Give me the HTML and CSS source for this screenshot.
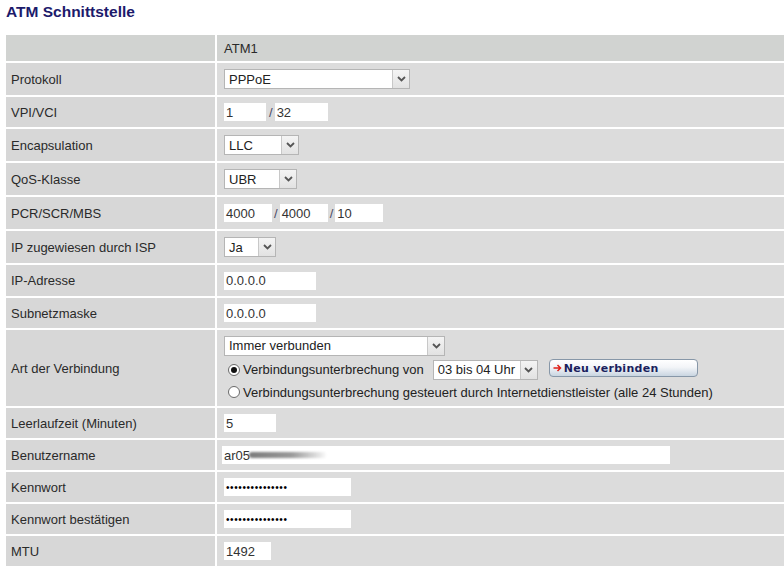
FILE: index.html
```html
<!DOCTYPE html>
<html lang="de">
<head>
<meta charset="utf-8">
<title>ATM Schnittstelle</title>
<link rel="stylesheet" href="styles.css">
</head>
<body>
<h1 class="title">ATM Schnittstelle</h1>
<div class="grid">
  <div class="cell head label"></div>
  <div class="cell head value">ATM1</div>

  <div class="cell label">Protokoll</div>
  <div class="cell value"><div class="sel w-proto"><span class="sel-txt">PPPoE</span><span class="sel-btn"><svg width="9" height="6" viewBox="0 0 9 6"><path d="M1 1 L4.5 4.5 L8 1" fill="none" stroke="#555" stroke-width="1.8"/></svg></span></div></div>

  <div class="cell label">VPI/VCI</div>
  <div class="cell value"><span class="inp w-42">1</span><span class="slash">/</span><span class="inp w-53">32</span></div>

  <div class="cell label">Encapsulation</div>
  <div class="cell value"><div class="sel w-enc"><span class="sel-txt">LLC</span><span class="sel-btn"><svg width="9" height="6" viewBox="0 0 9 6"><path d="M1 1 L4.5 4.5 L8 1" fill="none" stroke="#555" stroke-width="1.8"/></svg></span></div></div>

  <div class="cell label">QoS-Klasse</div>
  <div class="cell value"><div class="sel w-qos"><span class="sel-txt">UBR</span><span class="sel-btn"><svg width="9" height="6" viewBox="0 0 9 6"><path d="M1 1 L4.5 4.5 L8 1" fill="none" stroke="#555" stroke-width="1.8"/></svg></span></div></div>

  <div class="cell label">PCR/SCR/MBS</div>
  <div class="cell value"><span class="inp w-48">4000</span><span class="slash s-wide">/</span><span class="inp w-48">4000</span><span class="slash s-wide">/</span><span class="inp w-48">10</span></div>

  <div class="cell label">IP zugewiesen durch ISP</div>
  <div class="cell value"><div class="sel w-ja"><span class="sel-txt">Ja</span><span class="sel-btn"><svg width="9" height="6" viewBox="0 0 9 6"><path d="M1 1 L4.5 4.5 L8 1" fill="none" stroke="#555" stroke-width="1.8"/></svg></span></div></div>

  <div class="cell label">IP-Adresse</div>
  <div class="cell value"><span class="inp w-92">0.0.0.0</span></div>

  <div class="cell label">Subnetzmaske</div>
  <div class="cell value"><span class="inp w-92">0.0.0.0</span></div>

  <div class="cell label">Art der Verbindung</div>
  <div class="cell value art">
    <div class="sel w-art"><span class="sel-txt">Immer verbunden</span><span class="sel-btn"><svg width="9" height="6" viewBox="0 0 9 6"><path d="M1 1 L4.5 4.5 L8 1" fill="none" stroke="#555" stroke-width="1.8"/></svg></span></div>
    <div class="radio-row">
      <span class="radio on"></span>
      <span class="radio-txt">Verbindungsunterbrechung von</span>
      <div class="sel w-uhr"><span class="sel-txt">03 bis 04 Uhr</span><span class="sel-btn"><svg width="9" height="6" viewBox="0 0 9 6"><path d="M1 1 L4.5 4.5 L8 1" fill="none" stroke="#555" stroke-width="1.8"/></svg></span></div>
      <span class="btn"><svg class="btn-arrow" width="9" height="8" viewBox="0 0 9 8"><path d="M0.5 4 H7.5 M4.5 1 L7.5 4 L4.5 7" fill="none" stroke="#e0201a" stroke-width="1.5"/></svg>Neu verbinden</span>
    </div>
    <div class="radio-row">
      <span class="radio"></span>
      <span class="radio-txt">Verbindungsunterbrechung gesteuert durch Internetdienstleister (alle 24 Stunden)</span>
    </div>
  </div>

  <div class="cell label">Leerlaufzeit (Minuten)</div>
  <div class="cell value"><span class="inp w-52">5</span></div>

  <div class="cell label">Benutzername</div>
  <div class="cell value"><span class="inp w-user">ar05<span class="smear"></span></span></div>

  <div class="cell label">Kennwort</div>
  <div class="cell value"><span class="inp w-pw pw">•••••••••••••••</span></div>

  <div class="cell label">Kennwort bestätigen</div>
  <div class="cell value"><span class="inp w-pw pw">•••••••••••••••</span></div>

  <div class="cell label">MTU</div>
  <div class="cell value"><span class="inp w-47">1492</span></div>
</div>
</body>
</html>
```

FILE: styles.css
```css
html, body {
  margin: 0;
  padding: 0;
  background: #ffffff;
}
body {
  font-family: "Liberation Sans", Arial, sans-serif;
  font-size: 13px;
  color: #2a2a2a;
}
.title {
  margin: 0;
  padding: 3px 0 0 6px;
  height: 35px;
  box-sizing: border-box;
  font-size: 15.5px;
  font-weight: bold;
  color: #1c1a6b;
  line-height: 18px;
}
.grid {
  display: grid;
  grid-template-columns: 209px 1fr;
  grid-template-rows: 26px 32px 30px 32px 32px 32px 32px 31px 30px 76px 30px 30px 30px 30px 30px;
  column-gap: 2px;
  row-gap: 2px;
  margin-left: 6px;
  background: #ffffff;
}
.cell {
  display: flex;
  align-items: center;
  background: #dcdcdc;
}
.label {
  padding-left: 5px;
  background: #d7d7d7;
}
.value {
  padding-left: 7px;
}
.head {
  background: #d1d3d1;
}
.head.label {
  background: #d1d3d1;
}
.inp {
  display: inline-flex;
  align-items: center;
  height: 18px;
  background: #ffffff;
  padding-left: 2px;
  box-sizing: border-box;
  color: #333333;
  font-size: 13px;
}
.w-42 { width: 42px; }
.w-53 { width: 53px; }
.w-48 { width: 48px; }
.w-92 { width: 92px; }
.w-52 { width: 52px; }
.w-47 { width: 47px; }
.w-pw { width: 127px; }
.w-user { width: 448px; margin-left: -2px; }
.slash {
  color: #4b4b66;
  padding: 0 2px 0 3px;
}
.s-wide {
  padding: 0 2px 0 2px;
}
.pw {
  font-size: 10px;
  letter-spacing: 0.6px;
  color: #000000;
}
.smear {
  display: inline-block;
  width: 78px;
  height: 6px;
  margin-left: -1px;
  border-radius: 3px;
  background: linear-gradient(to right, #7c7c7c 0%, #9a9a9a 55%, rgba(190,190,190,0.4) 90%, rgba(220,220,220,0) 100%);
  filter: blur(1px);
}
.sel {
  display: inline-flex;
  height: 20px;
  background: #ffffff;
  border: 1px solid #b5b5b5;
  box-sizing: border-box;
}
.sel-txt {
  flex: 1;
  display: flex;
  align-items: center;
  padding-left: 4px;
  color: #222222;
  font-size: 13px;
  white-space: nowrap;
  overflow: hidden;
}
.sel-btn {
  width: 16px;
  display: flex;
  align-items: center;
  justify-content: center;
  background: linear-gradient(#f4f4f4, #e2e2e2);
  border-left: 1px solid #c8c8c8;
}
.w-proto { width: 186px; }
.w-enc { width: 75px; }
.w-qos { width: 73px; }
.w-ja { width: 52px; }
.w-art { width: 221px; }
.w-uhr { width: 105px; margin-left: 9px; }
.art {
  flex-direction: column;
  align-items: flex-start;
  justify-content: center;
  gap: 4px;
}
.radio-row {
  display: flex;
  align-items: center;
  height: 20px;
  padding-left: 4px;
}
.art .radio-row:last-child {
  height: 17px;
}
.radio {
  width: 12px;
  height: 12px;
  border-radius: 50%;
  border: 1px solid #6a6a6a;
  background: #ffffff;
  box-sizing: border-box;
  display: inline-flex;
  align-items: center;
  justify-content: center;
  margin-right: 3px;
}
.radio.on::after {
  content: "";
  width: 6px;
  height: 6px;
  border-radius: 50%;
  background: #111111;
}
.radio-txt {
  white-space: nowrap;
  color: #222222;
}
.btn {
  display: inline-flex;
  align-items: center;
  width: 149px;
  height: 18px;
  margin-left: 11px;
  margin-top: -3px;
  box-sizing: border-box;
  border: 1px solid #8797a8;
  border-radius: 4px;
  background: linear-gradient(#ffffff 0%, #f3f5f8 45%, #c9d5e1 100%);
  padding-left: 3px;
  font-family: "DejaVu Sans", Verdana, sans-serif;
  font-weight: bold;
  font-size: 11px;
  letter-spacing: 0.3px;
  color: #1b1f5e;
}
.btn-arrow {
  margin-right: 2px;
}
```
